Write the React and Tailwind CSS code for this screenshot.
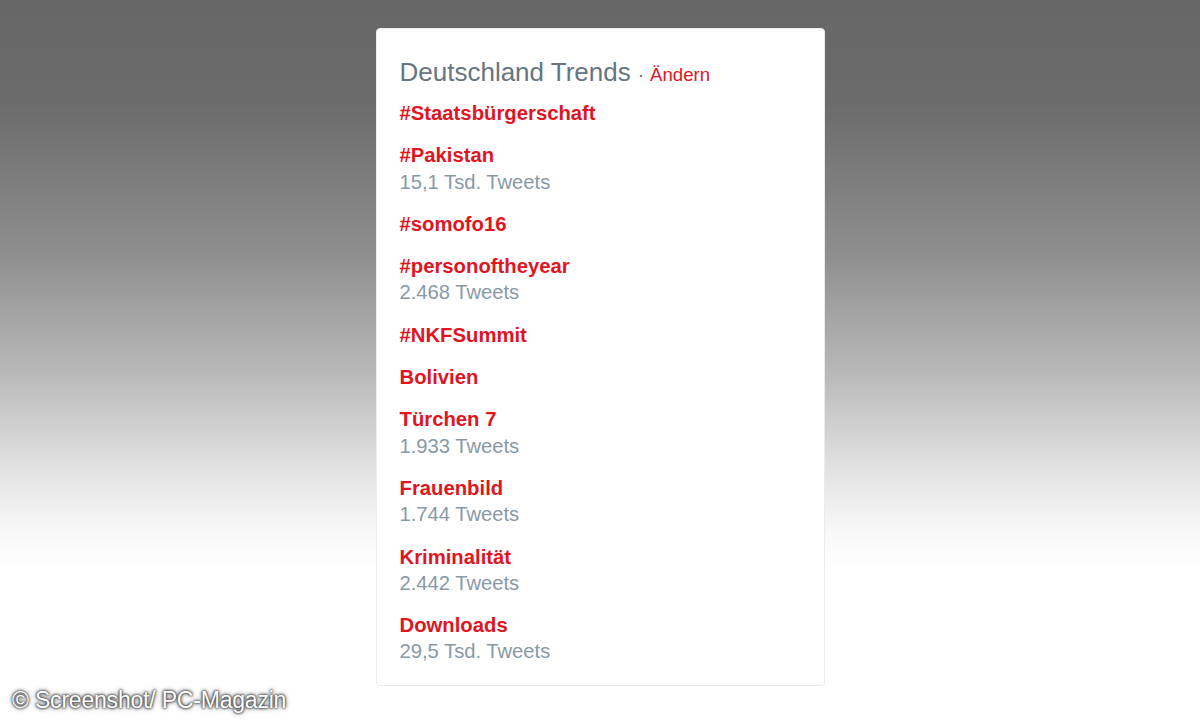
import React from "react";

const trends = [
  { name: "#Staatsbürgerschaft" },
  { name: "#Pakistan", count: "15,1 Tsd. Tweets" },
  { name: "#somofo16" },
  { name: "#personoftheyear", count: "2.468 Tweets" },
  { name: "#NKFSummit" },
  { name: "Bolivien" },
  { name: "Türchen 7", count: "1.933 Tweets" },
  { name: "Frauenbild", count: "1.744 Tweets" },
  { name: "Kriminalität", count: "2.442 Tweets" },
  { name: "Downloads", count: "29,5 Tsd. Tweets" },
];

export default function App() {
  return (
    <div
      className="relative w-[1200px] h-[720px] overflow-hidden bg-[linear-gradient(to_bottom,#676767_0%,#6b6b6b_14%,#8e8e8e_35%,#b9b9b9_52%,#e2e2e2_65%,#f8f8f8_74%,#ffffff_79%,#ffffff_100%)] flex justify-center pt-[28px]"
      style={{ fontFamily: '"Liberation Sans", Arial, sans-serif' }}
    >
      <div className="w-[449px] h-[658px] bg-white border border-[#e6ecf0] rounded-[4px] px-[23px] pt-[24px] flex flex-col">
        <div className="flex items-baseline h-[34px]">
          <span className="text-[26px] font-light text-[#66757f]">
            Deutschland Trends
          </span>
          <span className="text-[19px] text-[#66757f] ml-[7px] mr-[6px]">·</span>
          <span className="text-[18.6px] text-[#e0151f]">Ändern</span>
        </div>
        <div className="flex flex-col mt-[13px]">
          {trends.map((t) => (
            <div key={t.name} className="flex flex-col pb-[16px]">
              <div className="text-[20.3px] font-bold text-[#e0151f] leading-[26.3px]">
                {t.name}
              </div>
              {t.count && (
                <div className="text-[20.2px] text-[#8899a6] leading-[26.3px]">
                  {t.count}
                </div>
              )}
            </div>
          ))}
        </div>
      </div>
      <div
        className="absolute left-[12px] top-[683px] text-[23px] text-white tracking-[-0.2px]"
        style={{ textShadow: "0 0 3px #333, 0 0 5px #555, 0 0 2px #222" }}
      >
        © Screenshot/ PC-Magazin
      </div>
    </div>
  );
}
